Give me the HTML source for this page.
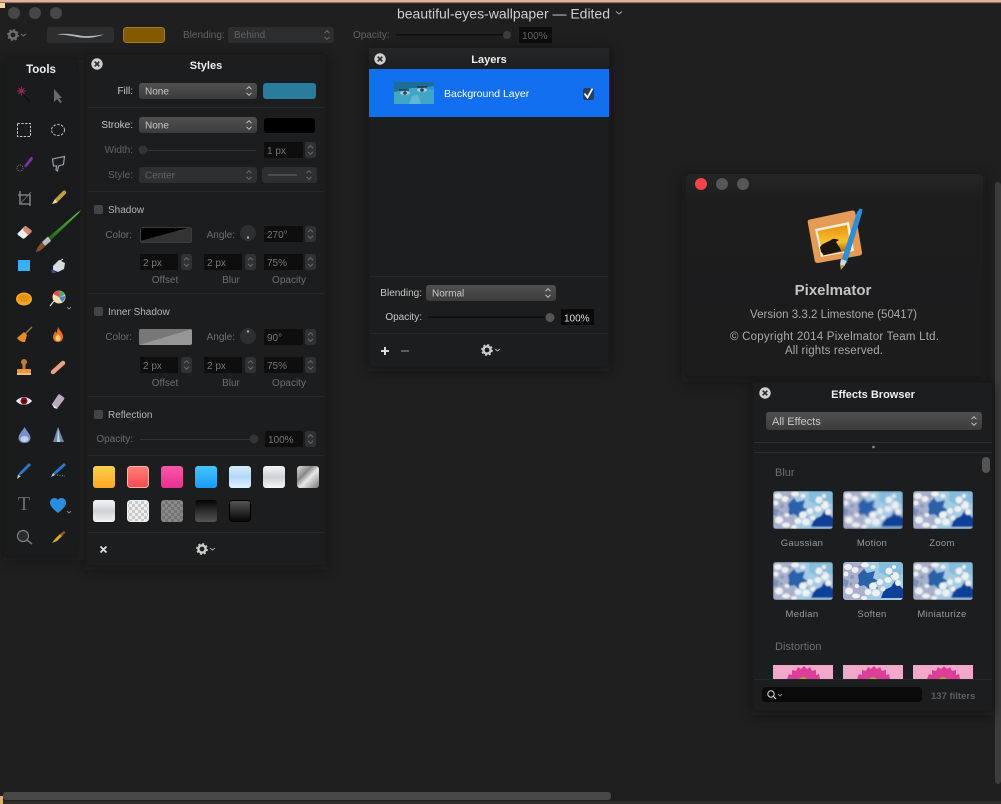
<!DOCTYPE html>
<html><head><meta charset="utf-8"><title>Pixelmator</title>
<style>
html,body{margin:0;padding:0;background:#1f1f1f;width:1001px;height:804px;overflow:hidden}
svg{display:block;position:absolute;left:0;top:0}
text{font-family:"Liberation Sans",sans-serif;font-size:10px;fill:#bbb}
.d{fill:#626262}.m{fill:#777}.l{fill:#c8c8c8}.w{fill:#fff}.r{text-anchor:end}.c{text-anchor:middle}
.b{font-weight:bold;font-size:11.5px;fill:#eee}
</style></head><body>
<svg width="1001" height="804" viewBox="0 0 1001 804" xmlns="http://www.w3.org/2000/svg">
<defs>
<linearGradient id="sel" x1="0" y1="0" x2="0" y2="1"><stop offset="0" stop-color="#505050"/><stop offset="1" stop-color="#3c3c3c"/></linearGradient>
<linearGradient id="hdr" x1="0" y1="0" x2="0" y2="1"><stop offset="0" stop-color="#262728"/><stop offset="1" stop-color="#1c1d1e"/></linearGradient>
<linearGradient id="abt" x1="0" y1="0" x2="0" y2="1"><stop offset="0" stop-color="#252525"/><stop offset=".13" stop-color="#1d1d1e"/><stop offset="1" stop-color="#1c1c1d"/></linearGradient>
<linearGradient id="yel" x1="0" y1="0" x2="0" y2="1"><stop offset="0" stop-color="#ffd050"/><stop offset="1" stop-color="#ffa722"/></linearGradient>
<linearGradient id="red" x1="0" y1="0" x2="0" y2="1"><stop offset="0" stop-color="#ff8078"/><stop offset="1" stop-color="#f84850"/></linearGradient>
<linearGradient id="pnk" x1="0" y1="0" x2="0" y2="1"><stop offset="0" stop-color="#f858a8"/><stop offset="1" stop-color="#ea2f90"/></linearGradient>
<linearGradient id="blu" x1="0" y1="0" x2="0" y2="1"><stop offset="0" stop-color="#44c4ff"/><stop offset="1" stop-color="#1a9cf8"/></linearGradient>
<linearGradient id="lbl" x1="0" y1="0" x2="0" y2="1"><stop offset="0" stop-color="#d4ecff"/><stop offset=".5" stop-color="#b4d8fa"/><stop offset="1" stop-color="#e4f2ff"/></linearGradient>
<linearGradient id="wht" x1="0" y1="0" x2="0" y2="1"><stop offset="0" stop-color="#f4f4f4"/><stop offset=".5" stop-color="#ced2d4"/><stop offset="1" stop-color="#f4f5f5"/></linearGradient>
<linearGradient id="mtl" x1="0" y1="0" x2="1" y2="1"><stop offset="0" stop-color="#ddd"/><stop offset=".35" stop-color="#888"/><stop offset=".55" stop-color="#e8e8e8"/><stop offset="1" stop-color="#777"/></linearGradient>
<linearGradient id="blk" x1="0" y1="0" x2="0" y2="1"><stop offset="0" stop-color="#050505"/><stop offset="1" stop-color="#555"/></linearGradient>
<linearGradient id="blk2" x1="0" y1="0" x2="0" y2="1"><stop offset="0" stop-color="#555"/><stop offset="1" stop-color="#050505"/></linearGradient>
<linearGradient id="brush" x1="0" y1="1" x2="1" y2="0"><stop offset="0" stop-color="#1d5c14"/><stop offset="1" stop-color="#5cc43a"/></linearGradient>
<linearGradient id="sunset" x1="0" y1="0" x2="0" y2="1"><stop offset="0" stop-color="#e89010"/><stop offset=".55" stop-color="#fcc030"/><stop offset="1" stop-color="#7a4a08"/></linearGradient>
<pattern id="chk" width="6" height="6" patternUnits="userSpaceOnUse"><rect width="6" height="6" fill="#eee"/><rect width="3" height="3" fill="#c8c8c8"/><rect x="3" y="3" width="3" height="3" fill="#c8c8c8"/></pattern>
<pattern id="chk2" width="6" height="6" patternUnits="userSpaceOnUse"><rect width="6" height="6" fill="#8a8a8a"/><rect width="3" height="3" fill="#747474"/><rect x="3" y="3" width="3" height="3" fill="#747474"/></pattern>
<filter id="sf" x="-10%" y="-10%" width="120%" height="120%"><feGaussianBlur stdDeviation="0.35"/></filter>
<filter id="sh" x="-15%" y="-15%" width="130%" height="130%"><feGaussianBlur stdDeviation="6"/></filter>
<filter id="bl1"><feGaussianBlur stdDeviation="1.1"/></filter>
<filter id="bl2"><feGaussianBlur stdDeviation="0.7"/></filter>
<filter id="bl3"><feGaussianBlur stdDeviation="0.3"/></filter>
<clipPath id="tc"><rect width="60" height="38" rx="3"/></clipPath>
<clipPath id="tp"><rect width="60" height="14" rx="0"/></clipPath>
<g id="flw">
<rect width="60" height="38" fill="#a4cbe4"/>
<rect x="0" y="0" width="22" height="38" fill="#a8b0cc"/>
<path d="M36 0h24v12l-12 4-12-6z" fill="#86bcdc"/>
<path d="M15 13l6-6 3 4 8-2-2 7 5 3-7 2-2 6-5-4-7 2 2-6z" fill="#2a62aa"/>
<path d="M38 36l3-8 7-3 4-6 5 5 3 3v9z" fill="#0e3f98"/>
<path d="M0 16l6 3-2 6-4-1z" fill="#7c90b8"/>
<g fill="#eef0f2">
<ellipse cx="5" cy="5" rx="4" ry="3"/><ellipse cx="12" cy="8" rx="3.500" ry="3"/><ellipse cx="3" cy="12" rx="2.500" ry="2.500"/>
<ellipse cx="22" cy="3" rx="4" ry="2.500"/><ellipse cx="30" cy="5" rx="2.500" ry="2"/>
<ellipse cx="6" cy="29" rx="4" ry="3.500"/><ellipse cx="13" cy="34" rx="4" ry="2.500"/>
<ellipse cx="14" cy="24" rx="2.500" ry="2"/>
<ellipse cx="30" cy="24" rx="4" ry="3.500"/><ellipse cx="37" cy="20" rx="3" ry="3"/><ellipse cx="25" cy="30" rx="3.500" ry="3"/>
<ellipse cx="33" cy="31" rx="4" ry="3.500"/><ellipse cx="40" cy="27" rx="2.500" ry="2.500"/><ellipse cx="21" cy="36" rx="3" ry="2"/>
<ellipse cx="46" cy="9" rx="3.500" ry="3.500"/><ellipse cx="52" cy="14" rx="4" ry="4"/><ellipse cx="45" cy="18" rx="3.500" ry="3"/><ellipse cx="55" cy="21" rx="3" ry="3"/><ellipse cx="51" cy="5" rx="2" ry="2"/>
</g>
<g fill="#8d96b4"><circle cx="9" cy="15" r="2"/><circle cx="8" cy="22" r="1.500"/><circle cx="34" cy="26" r="1.200"/><circle cx="49" cy="12" r="1"/><circle cx="17" cy="5" r="1.300"/></g>
</g>
<g id="t1"><g clip-path="url(#tc)"><g filter="url(#bl2)"><use href="#flw"/></g></g></g>
<g id="t2"><g clip-path="url(#tc)"><g filter="url(#bl1)"><use href="#flw"/></g></g></g>
<g id="t3"><g clip-path="url(#tc)"><g filter="url(#bl3)"><use href="#flw"/></g></g></g>
<g id="pk"><g clip-path="url(#tp)"><rect width="60" height="14" fill="#f2a8c8"/><path d="M30 18L14 14 16 9 19 10 19 5 23 6 25 2 28 4 31 1 34 4 37 2 39 6 43 5 43 10 46 9 47 14z" fill="#dc3f9a"/><circle cx="30" cy="17" r="5" fill="#b4a030"/></g></g>
<g id="ud" fill="none" stroke="#c4c4c4" stroke-width="1"><path d="M-2.500 -1.800L0 -4.300L2.500 -1.800M-2.500 1.800L0 4.300L2.500 1.800"/></g>
<g id="udd" fill="none" stroke="#6c6c6c" stroke-width="1"><path d="M-2.500 -1.800L0 -4.300L2.500 -1.800M-2.500 1.800L0 4.300L2.500 1.800"/></g>
<g id="gear"><circle r="3.600" fill="none" stroke="currentColor" stroke-width="2.400"/><circle r="5" fill="none" stroke="currentColor" stroke-width="1.800" stroke-dasharray="2 1.930"/></g>
<g id="cl"><circle r="5.700" fill="#cfcfcf"/><path d="M-2.300 -2.300L2.300 2.300M2.300 -2.300L-2.300 2.300" stroke="#2b2b2b" stroke-width="1.700"/></g>
<g id="stp"><rect x="0" y="0" width="11" height="16" rx="2.500" fill="#303132"/><use href="#udd" x="5.500" y="8"/></g>
</defs>

<rect width="1001" height="804" fill="#1f1f1f"/>
<rect width="1001" height="2.500" fill="#e4b396"/>
<rect y="2.500" width="1001" height="1" fill="#3c3230"/>
<rect x="0" y="3" width="5" height="5" fill="#f0d8a8"/>
<rect x="3" y="792" width="608" height="8" rx="3" fill="#484848"/>
<rect x="0" y="801" width="1001" height="3" fill="#2e2c2a"/>
<rect x="0" y="796" width="3" height="8" fill="#e0b070"/>
<rect x="995" y="182" width="6" height="602" rx="3" fill="#3c3c3c"/>

<!-- soft shadows -->
<g filter="url(#sh)" fill="#0c0c0c" opacity=".45">
<rect x="4" y="60" width="74" height="500"/><rect x="85" y="56" width="242" height="514"/><rect x="368" y="49" width="242" height="322"/><rect x="682" y="176" width="304" height="206"/><rect x="752" y="384" width="242" height="331"/>
</g>

<!-- top toolbar -->
<circle cx="14" cy="13" r="6" fill="#464646"/><circle cx="35" cy="13" r="6" fill="#464646"/><circle cx="56" cy="13" r="6" fill="#464646"/>
<text x="397" y="18.500" style="font-size:14px;fill:#cfcfcf" textLength="213">beautiful-eyes-wallpaper — Edited</text>
<path d="M616 11.500l3 2.500 3-2.500" fill="none" stroke="#aaa" stroke-width="1"/>
<use href="#gear" x="13" y="35" style="color:#6e6e6e"/><path d="M21 34l2.500 2 2.500-2" fill="none" stroke="#777"/>
<rect x="47" y="27" width="67" height="16" rx="3" fill="#2d2e2f"/>
<path d="M57 34.500c10-2 18 .5 27 1.500 8 .5 14-1 20-1.500-8 3-15 4-24 3-8-1.500-15-3-23-3z" fill="#b8b8b8"/>
<rect x="123.500" y="27.500" width="41" height="15" rx="3" fill="#835a00" stroke="#a37c1c"/>
<text x="183" y="38" class="d">Blending:</text>
<rect x="228" y="27" width="106" height="16" rx="3" fill="#2c2d2e"/>
<text x="234" y="38" class="d">Behind</text><use href="#udd" x="327" y="35"/>
<text x="353" y="38" class="d">Opacity:</text>
<rect x="396" y="34" width="110" height="1.500" fill="#0e0e0e"/><circle cx="507" cy="35" r="4" fill="#3c3c3c"/>
<rect x="519" y="27" width="33" height="16" fill="#0c0c0c"/><text x="522" y="39" class="d">100%</text>

<!-- Tools panel -->
<rect x="5" y="58" width="72" height="499" rx="3" fill="#1a1b1c" stroke="#181818"/>
<text x="41" y="73" class="c" style="font-size:11.500px;fill:#eee;font-weight:bold">Tools</text>

<!-- Styles panel -->
<rect x="86" y="54" width="240" height="512" rx="4" fill="#1c1d1e" stroke="#181818"/>
<use href="#cl" x="97" y="64"/>
<text x="206" y="69" class="b c" style="font-size:11px">Styles</text>
<text x="133" y="94" class="r l">Fill:</text>
<rect x="139" y="83" width="118" height="16" rx="3" fill="url(#sel)"/><text x="145" y="94.500" class="l">None</text><use href="#ud" x="249" y="91"/>
<rect x="263" y="83" width="53" height="16" rx="3" fill="#2a7c9c"/>
<rect x="88" y="107" width="236" height="1" fill="#262728"/>
<text x="133" y="128" class="r l">Stroke:</text>
<rect x="139" y="117" width="118" height="16" rx="3" fill="url(#sel)"/><text x="145" y="128.500" class="l">None</text><use href="#ud" x="249" y="125"/>
<rect x="264" y="118" width="51" height="15" rx="3" fill="#000"/>
<text x="133" y="153" class="r d">Width:</text>
<rect x="146" y="150" width="110" height="1" fill="#333"/><circle cx="143" cy="150" r="4.500" fill="#333"/>
<rect x="264" y="142" width="39" height="16" fill="#0e0e0e"/><text x="267" y="154" class="m">1 px</text><use href="#stp" x="305" y="142"/>
<text x="133" y="178" class="r d">Style:</text>
<rect x="139" y="167" width="118" height="16" rx="3" fill="#2e2f30"/><text x="145" y="178.500" class="d">Center</text><use href="#udd" x="249" y="175"/>
<rect x="262" y="167" width="55" height="16" rx="3" fill="#2e2f30"/><rect x="268" y="174.500" width="29" height="1" fill="#6a6a6a"/><use href="#udd" x="309" y="175"/>
<rect x="88" y="191" width="236" height="1" fill="#262728"/>

<rect x="94" y="205" width="9" height="9" rx="2" fill="#434445"/>
<text x="108" y="213" style="fill:#b4b4b4">Shadow</text>
<text x="132" y="238" class="r" style="fill:#6e6e6e">Color:</text>
<rect x="140" y="227" width="52" height="16" rx="2" fill="#333"/><path d="M140 229a2 2 0 0 1 2-2h49l-51 14z" fill="#000"/><rect x="140.500" y="227.500" width="51" height="15" rx="2" fill="none" stroke="#3c3c3c"/>
<text x="235" y="238" class="r" style="fill:#6e6e6e">Angle:</text>
<circle cx="248" cy="233" r="8" fill="#2e2f30"/><circle cx="248" cy="237.500" r="1.200" fill="#aaa"/>
<rect x="264" y="226" width="39" height="16" fill="#0e0e0e"/><text x="267" y="238" class="m">270°</text><use href="#stp" x="305" y="226"/>
<rect x="140" y="254" width="38" height="16" fill="#0e0e0e"/><text x="143" y="266" class="m">2 px</text><use href="#stp" x="181" y="254"/>
<rect x="204" y="254" width="38" height="16" fill="#0e0e0e"/><text x="207" y="266" class="m">2 px</text><use href="#stp" x="245" y="254"/>
<rect x="264" y="254" width="39" height="16" fill="#0e0e0e"/><text x="267" y="266" class="m">75%</text><use href="#stp" x="305" y="254"/>
<text x="165" y="283" class="c" style="fill:#6e6e6e">Offset</text><text x="231" y="283" class="c" style="fill:#6e6e6e">Blur</text><text x="289" y="283" class="c" style="fill:#6e6e6e">Opacity</text>
<rect x="88" y="293" width="236" height="1" fill="#262728"/>

<rect x="94" y="307" width="9" height="9" rx="2" fill="#434445"/>
<text x="108" y="315" style="fill:#b4b4b4">Inner Shadow</text>
<text x="132" y="340" class="r" style="fill:#6e6e6e">Color:</text>
<rect x="139" y="329" width="53" height="16" rx="2" fill="#969696"/><path d="M139 345v-14a2 2 0 0 1 2-2h51z" fill="#787878"/>
<text x="235" y="340" class="r" style="fill:#6e6e6e">Angle:</text>
<circle cx="248" cy="336" r="8" fill="#2e2f30"/><circle cx="248" cy="331.500" r="1.200" fill="#aaa"/>
<rect x="264" y="329" width="39" height="16" fill="#0e0e0e"/><text x="267" y="341" class="m">90°</text><use href="#stp" x="305" y="329"/>
<rect x="140" y="357" width="38" height="16" fill="#0e0e0e"/><text x="143" y="369" class="m">2 px</text><use href="#stp" x="181" y="357"/>
<rect x="204" y="357" width="38" height="16" fill="#0e0e0e"/><text x="207" y="369" class="m">2 px</text><use href="#stp" x="245" y="357"/>
<rect x="264" y="357" width="39" height="16" fill="#0e0e0e"/><text x="267" y="369" class="m">75%</text><use href="#stp" x="305" y="357"/>
<text x="165" y="386" class="c" style="fill:#6e6e6e">Offset</text><text x="231" y="386" class="c" style="fill:#6e6e6e">Blur</text><text x="289" y="386" class="c" style="fill:#6e6e6e">Opacity</text>
<rect x="88" y="396" width="236" height="1" fill="#262728"/>

<rect x="94" y="410" width="9" height="9" rx="2" fill="#434445"/>
<text x="108" y="418" style="fill:#b4b4b4">Reflection</text>
<text x="133" y="442" class="r" style="fill:#6e6e6e">Opacity:</text>
<rect x="140" y="439" width="112" height="1" fill="#333"/><circle cx="254" cy="439" r="4.500" fill="#333"/>
<rect x="265" y="431" width="38" height="16" fill="#0e0e0e"/><text x="268" y="443" class="m">100%</text><use href="#stp" x="305" y="431"/>
<rect x="88" y="455" width="236" height="1" fill="#262728"/>

<rect x="93" y="466" width="22" height="22" rx="3" fill="url(#yel)"/>
<rect x="127.500" y="466.500" width="21" height="21" rx="3" fill="url(#red)" stroke="#ffb0a8"/>
<rect x="161" y="466" width="22" height="22" rx="3" fill="url(#pnk)"/>
<rect x="195" y="466" width="22" height="22" rx="3" fill="url(#blu)"/>
<rect x="229" y="466" width="22" height="22" rx="3" fill="url(#lbl)"/>
<rect x="263" y="466" width="22" height="22" rx="3" fill="url(#wht)"/>
<rect x="297" y="466" width="22" height="22" rx="3" fill="url(#mtl)"/>
<rect x="93" y="500" width="22" height="22" rx="3" fill="url(#wht)"/>
<rect x="127.500" y="500.500" width="21" height="21" rx="3" fill="url(#chk)" stroke="#eee"/>
<rect x="161" y="500" width="22" height="22" rx="3" fill="url(#chk2)"/>
<rect x="195" y="500" width="22" height="22" rx="3" fill="url(#blk)"/>
<rect x="229.500" y="500.500" width="21" height="21" rx="3" fill="url(#blk2)" stroke="#000"/>
<rect x="88" y="532" width="236" height="1" fill="#262728"/>
<path d="M100.500 546.500l6 6m0-6l-6 6" stroke="#ddd" stroke-width="1.800"/>
<use href="#gear" x="202" y="549" style="color:#ccc"/><path d="M210 548l2.500 2 2.500-2" fill="none" stroke="#aaa"/>

<!-- Layers panel -->
<rect x="369" y="47" width="240" height="320" rx="3" fill="#1c1d1e" stroke="#181818"/>
<rect x="369" y="48" width="240" height="21" fill="url(#hdr)"/>
<use href="#cl" x="380" y="59"/>
<text x="489" y="63" class="b c" style="font-size:11px">Layers</text>
<rect x="369" y="69" width="240" height="48" fill="#126ff0"/>
<g filter="url(#sf)">
<rect x="394" y="82" width="40" height="22" fill="#2a98c0"/>
<path d="M394 82h40v4l-18 3-22 3z" fill="#1b6e98"/>
<path d="M394 92l14-3c6-2 14-1 26 1v14h-40z" fill="#3fa6c8"/>
<ellipse cx="405" cy="93" rx="5" ry="2" fill="#a8ccd8"/><ellipse cx="405" cy="93" rx="1.800" ry="1.800" fill="#2a3c4c"/>
<ellipse cx="422" cy="90" rx="5" ry="2" fill="#a8ccd8"/><ellipse cx="422" cy="90" rx="1.800" ry="1.800" fill="#2a3c4c"/>
<path d="M399 90l10 0M417 87l10 0" stroke="#123" stroke-width="1"/>
<path d="M412 96l6-1 3 9h-12z" fill="#62b8d4"/>
</g>
<text x="444" y="97" class="w" style="font-size:10.500px">Background Layer</text>
<rect x="583" y="88" width="11" height="12" rx="2" fill="#2c3e60"/>
<path d="M584.500 93.500l3 4 5-9" fill="none" stroke="#fff" stroke-width="1.800"/>
<rect x="370" y="276" width="238" height="1" fill="#262728"/>
<text x="422" y="296" class="r l">Blending:</text>
<rect x="426" y="285" width="130" height="16" rx="3" fill="url(#sel)"/><text x="432" y="296.500" class="l">Normal</text><use href="#ud" x="548" y="293"/>
<text x="422" y="320" class="r l">Opacity:</text>
<rect x="428" y="316.500" width="120" height="1.500" fill="#0c0c0c"/><circle cx="550" cy="317.500" r="4.500" fill="#555"/>
<rect x="561" y="309" width="33" height="16" fill="#0a0a0a"/><text x="564" y="321.500" style="fill:#ddd">100%</text>
<rect x="370" y="333" width="238" height="1" fill="#262728"/>
<path d="M381 351h8m-4-4v8" stroke="#eee" stroke-width="1.800"/>
<path d="M401 351h8" stroke="#666" stroke-width="1.800"/>
<use href="#gear" x="487" y="350" style="color:#ccc"/><path d="M495 349l2.500 2 2.500-2" fill="none" stroke="#aaa"/>

<!-- About window -->
<rect x="686" y="174" width="297" height="202" rx="5" fill="url(#abt)"/>
<circle cx="701" cy="184" r="6" fill="#f0444c"/><circle cx="722" cy="184" r="6" fill="#565656"/><circle cx="743" cy="184" r="6" fill="#565656"/>
<g filter="url(#sf)">
<path d="M810 219.500l42-9c1.500-.3 3 .5 3.300 2l6.700 40c.3 1.500-.7 2.800-2 3l-42 7.500c-1.500.3-3-.7-3.300-2l-7-39c-.3-1.200.5-2.200 2.300-2.500z" fill="#e59a55"/>
<path d="M815 229l34-7 5 29-33 6z" fill="#f8eedc"/>
<path d="M817.500 231l29.500-6 4 25-28 5.500z" fill="url(#sunset)"/>
<path d="M821 252l-1-5c3-4 8-5 11-7 2-2 6-1 8 0l-3 2 4 6 1 3-17 4z" fill="#1c1408"/>
<path d="M841 262l16-50 3-3.500 2.500 1-1 5-15 49z" fill="#2c8ed8"/>
<path d="M841 259l5.500 2-2 5-4.500-1.500z" fill="#d8d8d8"/>
<path d="M840 264.500l4 1.500-3 4z" fill="#c8a048"/>
</g>
<text x="833" y="295" class="c" style="font-size:15px;font-weight:bold;fill:#c4c4c4">Pixelmator</text>
<text x="750" y="318" style="font-size:11.500px;fill:#aaa" textLength="167">Version 3.3.2 Limestone (50417)</text>
<text x="730" y="340" style="font-size:11.500px;fill:#aaa" textLength="209">© Copyright 2014 Pixelmator Team Ltd.</text>
<text x="785" y="354" style="font-size:11.500px;fill:#aaa" textLength="98">All rights reserved.</text>

<!-- Effects browser -->
<rect x="753" y="382" width="240" height="329" rx="3" fill="#1c1d1e" stroke="#181818"/>
<use href="#cl" x="765" y="393"/>
<text x="873" y="398" class="b c" style="font-size:11px">Effects Browser</text>
<rect x="766" y="412" width="216" height="18" rx="3" fill="url(#sel)"/>
<text x="772" y="425" style="font-size:11px;fill:#c8c8c8">All Effects</text><use href="#ud" x="974" y="421"/>
<rect x="754" y="442" width="238" height="1" fill="#2e2e2e"/>
<circle cx="873.500" cy="447" r="1.300" fill="#888"/>
<rect x="754" y="452" width="238" height="1" fill="#2e2e2e"/>
<rect x="982" y="457" width="8" height="16" rx="4" fill="#555"/>
<text x="775" y="476" style="font-size:11px;fill:#6e6e6e">Blur</text>
<use href="#t1" x="773" y="491"/><use href="#t2" x="843" y="491"/><use href="#t1" x="913" y="491"/>
<text x="802" y="546" class="c" style="font-size:9.500px;fill:#999;letter-spacing:.3px">Gaussian</text>
<text x="872" y="546" class="c" style="font-size:9.500px;fill:#999;letter-spacing:.3px">Motion</text>
<text x="942" y="546" class="c" style="font-size:9.500px;fill:#999;letter-spacing:.3px">Zoom</text>
<use href="#t1" x="773" y="562"/><use href="#t3" x="843" y="562"/><use href="#t1" x="913" y="562"/>
<text x="802" y="617" class="c" style="font-size:9.500px;fill:#999;letter-spacing:.3px">Median</text>
<text x="872" y="617" class="c" style="font-size:9.500px;fill:#999;letter-spacing:.3px">Soften</text>
<text x="942" y="617" class="c" style="font-size:9.500px;fill:#999;letter-spacing:.3px">Miniaturize</text>
<text x="775" y="650" style="font-size:11px;fill:#6e6e6e">Distortion</text>
<use href="#pk" x="773" y="665"/><use href="#pk" x="843" y="665"/><use href="#pk" x="913" y="665"/>
<rect x="754" y="679" width="238" height="1" fill="#262728"/>
<rect x="762" y="687" width="160" height="15" rx="4" fill="#0a0a0a"/>
<circle cx="771" cy="694" r="3.200" fill="none" stroke="#ddd" stroke-width="1"/><path d="M773.500 696.500l2.500 2.500" stroke="#ddd" stroke-width="1.200"/>
<path d="M778 694l2 2 2-2" fill="none" stroke="#aaa" stroke-width=".8"/>
<text x="931" y="699" style="font-size:9.500px;font-weight:bold;fill:#5e5e5e">137 filters</text>

<!-- Tool icons -->
<g filter="url(#sf)">
<path d="M22 93l8 9" stroke="#111" stroke-width="1.500"/><path d="M17 91h9M21.500 86.500v9M18.500 88l6 6M24.500 88l-6 6" stroke="#a02464" stroke-width=".9"/>
<path d="M54 89l0 13 3-3 3 4 2-1-3-4h3z" fill="#6a6a6a"/>
<rect x="17.500" y="123.500" width="13" height="13" fill="none" stroke="#c8c8c8" stroke-width="1" stroke-dasharray="2.400 1.400"/>
<ellipse cx="58" cy="130" rx="6.500" ry="5.500" fill="none" stroke="#c0c0c0" stroke-dasharray="2.400 1.500"/>
<path d="M24 166l6-8c1-1.500 2-1.500 2.500-.5.500 1 .5 2-.5 3l-6 7z" fill="#7a30a0"/><circle cx="20" cy="168" r="3" fill="none" stroke="#777" stroke-dasharray="1 1"/>
<path d="M52.500 159l12-2.500-1 8-5 1.500-1 5-1.500-1 .5-4-3 0z" fill="none" stroke="#a8a8b4" stroke-width="1.100"/>
<path d="M20 191v13h10M18 195h12v11" fill="none" stroke="#7c7c7c" stroke-width="1.600"/><path d="M20 204l11-12" stroke="#777" stroke-width=".8"/>
<path d="M52 204l3-5 8-8c1-.8 2.500-.5 3 .5.500.8.200 1.800-.5 2.500l-8 8z" fill="#bfa040"/><path d="M52 204l3-5 2.500 3.500z" fill="#eadcaa"/>
<path d="M18 233l6-6c1-1 2-1 3 0l4 3c.8.800.8 1.500 0 2.500l-6 5.500c-1 .8-2 .8-3 0l-4-3c-.7-.8-.7-1.500 0-2z" fill="#eee"/><path d="M24 227l3 0 4 3 .5 2-3.500 3-5-5z" fill="#d88870"/>
<path d="M50 241l28-27 3-4-3.500 2.500-29 24.500z" fill="url(#brush)"/>
<path d="M48 236.500l3 4.500-6 5-3-4z" fill="#b8c0c0"/>
<path d="M42 242l3 4c-2 3-5 5-9 6 1-4 3-7 6-10z" fill="#8a5028"/>
<rect x="18" y="260" width="12" height="11" fill="#38b0f8"/>
<path d="M53 266l6-6 6 3-1 6-6 3-5-2z" fill="#d8dae0"/><path d="M51 270c2-1 4 0 5 3h-4z" fill="#3448a0"/><path d="M60 261l3-2" stroke="#eee"/>
<ellipse cx="24" cy="299" rx="8" ry="6.500" fill="#f2a420"/><ellipse cx="24" cy="298" rx="6" ry="4" fill="#e89418"/><path d="M20 297h8M21 300h6" stroke="#c87a10" stroke-dasharray="1 1.500"/>
<circle cx="59" cy="297" r="6.500" fill="#f4e0b0"/><path d="M59 297l-6-3a6.500 6.500 0 0 1 6-3.500z" fill="#e05050"/><path d="M59 297l0-6.500a6.500 6.500 0 0 1 6 4.500z" fill="#50a870"/><path d="M59 297l6-1a6.500 6.500 0 0 1-3 6z" fill="#5080d0"/><path d="M54 301l-4 5" stroke="#ddd" stroke-width="1.200"/>
<path d="M67 307l2 2 2-2" fill="none" stroke="#999" stroke-width=".8"/>
<path d="M32 327l-7 7" stroke="#a87830" stroke-width="1.300"/><path d="M17 338l7-6 3 3-2 7c-2 .500-6-1-8-4z" fill="#e88c20"/>
<path d="M58 327c1 3 5 5 5 10 0 3-2 5-5 5s-5-2-5-5c0-3 2-4 2-6 1 1 1 2 1.500 2 .5-2 1-4 1.500-6z" fill="#e8701c"/><path d="M58 334c1 1 2.500 2 2.500 4s-1 3-2.500 3-2.500-1-2.500-3 1.500-2.500 2.500-4z" fill="#f8cc80"/>
<circle cx="24" cy="362" r="3" fill="#c47a30"/><rect x="22.500" y="364" width="3" height="5" fill="#c47a30"/><rect x="17" y="369" width="14" height="4" rx="1" fill="#e8963c"/><rect x="17" y="373" width="14" height="2" fill="#f4c080"/>
<path d="M53 372l10-9" stroke="#e8a080" stroke-width="4.500" stroke-linecap="round"/>
<path d="M16 401c4-5 12-5 16 0-4 5-12 5-16 0z" fill="#eee"/><circle cx="24" cy="401" r="3.500" fill="#8a1020"/><circle cx="24" cy="401" r="1.300" fill="#300"/>
<path d="M52 404l6-9c.5-.8 1.200-1 2-.5l4 3c.5.500.5 1 0 2l-6 8c-.5.500-1 .7-2 .200l-4-3z" fill="#b8a8c0"/><path d="M52 404l4 3 2 2-4-1z" fill="#eee"/>
<path d="M24.500 427c2 4 6 7 6 11 0 3-2.700 5-6 5s-6-2-6-5c0-4 4-7 6-11z" fill="#7890c8"/><ellipse cx="24.500" cy="439" rx="4" ry="3" fill="#c4cee8"/>
<path d="M58 427l6 15h-11z" fill="#7088a8"/><path d="M58 427l2 15h-3z" fill="#c4d0e0"/>
<path d="M17 476l3-4 9-9 2 2-9 9z" fill="#2a78c8"/><path d="M17 479l1-4 3 1z" fill="#ccc"/>
<path d="M51 477l3-5 10-9 2 2-10 9z" fill="#2a78c8"/><path d="M51 477l2-4 2 2z" fill="#ccc"/><path d="M57 475l8 1" stroke="#7ab" stroke-dasharray="1 1.500"/>
<text x="24" y="510" class="c" style="font-family:'Liberation Serif',serif;font-size:20px;fill:#6a6a6a">T</text>
<path d="M58 513c-5-4-8-7-8-10.500 0-2.500 2-4.500 4.500-4.500 1.500 0 2.800.7 3.500 2 .7-1.300 2-2 3.500-2 2.500 0 4.500 2 4.500 4.500 0 3.500-3 6.500-8 10.500z" fill="#2c8ee0"/>
<path d="M67 511l2 2 2-2" fill="none" stroke="#999" stroke-width=".8"/>
<circle cx="23" cy="536" r="5.500" fill="#2a2a2a" stroke="#808080" stroke-width="1.200"/><path d="M27 540l5 4" stroke="#777" stroke-width="1.500"/>
<path d="M52 543l3-4 5-5 2 2-5 5z" fill="#d8b020"/><path d="M60 534l4-3 1.500 1.500-3.500 3.500z" fill="#a0522a"/>
</g>
</svg>
</body></html>
